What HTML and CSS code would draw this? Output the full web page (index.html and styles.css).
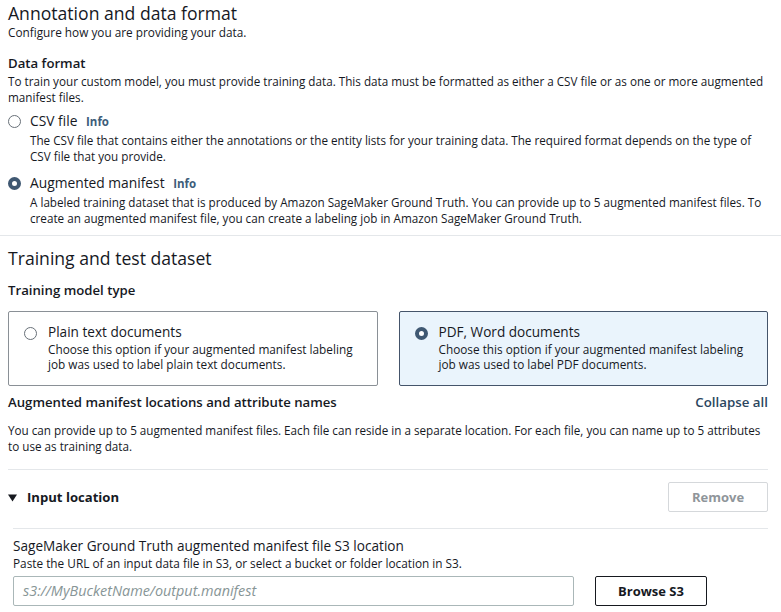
FILE: index.html
```html
<!DOCTYPE html>
<html>
<head>
<meta charset="utf-8">
<link rel="stylesheet" href="styles.css">
</head>
<body>
<div class="page">
  <section class="section">
    <h1 class="h1">Annotation and data format</h1>
    <p class="sub">Configure how you are providing your data.</p>
    <div class="field">
      <h3 class="label">Data format</h3>
      <p class="desc">To train your custom model, you must provide training data. This data must be formatted as either a CSV file or as one or more augmented manifest files.</p>
      <div class="radios">
        <div class="radio">
          <span class="dot"></span>
          <div class="rbody">
            <div class="rtitle">CSV file <span class="info">Info</span></div>
            <div class="rdesc">The CSV file that contains either the annotations or the entity lists for your training data. The required format depends on the type of CSV file that you provide.</div>
          </div>
        </div>
        <div class="radio">
          <span class="dot on"></span>
          <div class="rbody">
            <div class="rtitle">Augmented manifest <span class="info">Info</span></div>
            <div class="rdesc">A labeled training dataset that is produced by Amazon SageMaker Ground Truth. You can provide up to 5 augmented manifest files. To create an augmented manifest file, you can create a labeling job in Amazon SageMaker Ground Truth.</div>
          </div>
        </div>
      </div>
    </div>
  </section>
  <div class="rule rule1"></div>
  <section class="section">
    <h2 class="h2">Training and test dataset</h2>
    <h3 class="label label2">Training model type</h3>
    <div class="tiles">
      <div class="tile">
        <span class="dot"></span>
        <div class="rbody">
          <div class="ttitle">Plain text documents</div>
          <div class="tdesc">Choose this option if your augmented manifest labeling job was used to label plain text documents.</div>
        </div>
      </div>
      <div class="tile sel">
        <span class="dot on"></span>
        <div class="rbody">
          <div class="ttitle">PDF, Word documents</div>
          <div class="tdesc">Choose this option if your augmented manifest labeling job was used to label PDF documents.</div>
        </div>
      </div>
    </div>
    <div class="rowhead">
      <h3 class="label">Augmented manifest locations and attribute names</h3>
      <span class="link">Collapse all</span>
    </div>
    <p class="desc desc2">You can provide up to 5 augmented manifest files. Each file can reside in a separate location. For each file, you can name up to 5 attributes to use as training data.</p>
    <div class="rule rule2"></div>
    <div class="exphead">
      <div class="exptitle"><svg class="caret" width="9" height="8" viewBox="0 0 9 8"><path d="M0 0.5h9L4.5 7.5z" fill="#16191f"/></svg>Input location</div>
      <button class="btn disabled">Remove</button>
    </div>
    <div class="expbody">
      <div class="rule"></div>
      <h3 class="label3">SageMaker Ground Truth augmented manifest file S3 location</h3>
      <p class="hint">Paste the URL of an input data file in S3, or select a bucket or folder location in S3.</p>
      <div class="inputrow">
        <div class="input">s3://MyBucketName/output.manifest</div>
        <button class="btn browse">Browse S3</button>
      </div>
    </div>
  </section>
</div>
</body>
</html>
```
FILE: styles.css
```css
* { box-sizing: border-box; }
html, body { margin: 0; padding: 0; background: #fff; }
body {
  font-family: "Open Sans", "Noto Sans", sans-serif;
  color: #16191f;
  width: 781px;
  height: 612px;
  overflow: hidden;
}
.page { padding: 0 13px 0 8px; }
.h1 {
  font-size: 17.6px;
  line-height: 23px;
  font-weight: 400;
  margin: 0;
  padding-top: 2px;
}
.sub {
  font-size: 11.8px;
  line-height: 14px;
  margin: 0;
}
.field { margin-top: 15px; }
.label {
  font-size: 13.2px;
  line-height: 18px;
  font-weight: 600;
  margin: 0;
}
.desc {
  font-size: 11.7px;
  line-height: 16px;
  margin: 1px 0 0;
}
.radios { margin-top: 6px; display: flex; flex-direction: column; gap: 9px; }
.radio { display: flex; gap: 9px; align-items: flex-start; }
.dot {
  flex: none;
  width: 13px; height: 13px;
  border: 1.5px solid #687078;
  border-radius: 50%;
  margin-top: 4px;
  background: #fff;
}
.dot.on {
  border: 4px solid #3f5872;
  background: #fff;
}
.rbody { flex: 1; }
.rtitle { font-size: 13.8px; line-height: 19px; }
.info { font-size: 11.5px; font-weight: 700; color: #3d5d7a; margin-left: 5px; }
.rdesc { font-size: 11.7px; line-height: 16px; margin-top: 1px; }
.rule { height: 1px; background: #e4e7ea; }
.rule1 { margin: 9px -13px 0 -8px; }
.h2 {
  font-size: 17.6px;
  line-height: 24px;
  font-weight: 400;
  margin: 10px 0 0;
}
.label2 { margin-top: 11px; }
.tiles { display: grid; grid-template-columns: 1fr 1fr; gap: 21px; margin-top: 12px; }
.tile {
  display: flex; gap: 11px; align-items: flex-start;
  border: 1px solid #8a9096;
  border-radius: 2px;
  padding: 11px 15px 0 15px;
  height: 75px;
}
.tile .dot { margin-top: 4px; }
.tile.sel { background: #eaf4fc; border-color: #44546a; }
.ttitle { font-size: 13.6px; line-height: 18px; }
.tdesc { font-size: 11.8px; line-height: 15px; margin-top: 1px; }
.rowhead { display: flex; justify-content: space-between; align-items: baseline; margin-top: 7px; }
.link { font-size: 13.3px; font-weight: 600; color: #2b4660; }
.desc2 { margin-top: 11px; }
.rule2 { margin-top: 15px; }
.exphead { display: flex; justify-content: space-between; align-items: center; margin-top: 12px; }
.exptitle { font-size: 13.1px; font-weight: 700; display: flex; align-items: center; }
.caret { margin-right: 10px; margin-top: 1px; }
.btn {
  font-family: inherit;
  font-size: 13px;
  font-weight: 700;
  background: #fff;
  border-radius: 2px;
  height: 30px;
  padding: 0;
}
.btn.disabled { color: #8f959a; border: 1px solid #d5d8db; width: 100px; }
.expbody { padding-left: 5px; margin-top: 16px; }
.label3 { margin: 8px 0 0; font-size: 13.6px; line-height: 18px; font-weight: 500; }
.hint { font-size: 11.8px; line-height: 14px; margin: 1px 0 0; }
.inputrow { display: flex; gap: 21px; margin-top: 6px; }
.input {
  width: 561px;
  height: 30px;
  border: 1px solid #aab7b8;
  border-radius: 2px;
  font-size: 14.4px;
  line-height: 20px;
  font-style: italic;
  color: #879596;
  padding: 4px 9px;
}
.btn.browse { border: 1px solid #16191f; color: #16191f; width: 112px; }
```
